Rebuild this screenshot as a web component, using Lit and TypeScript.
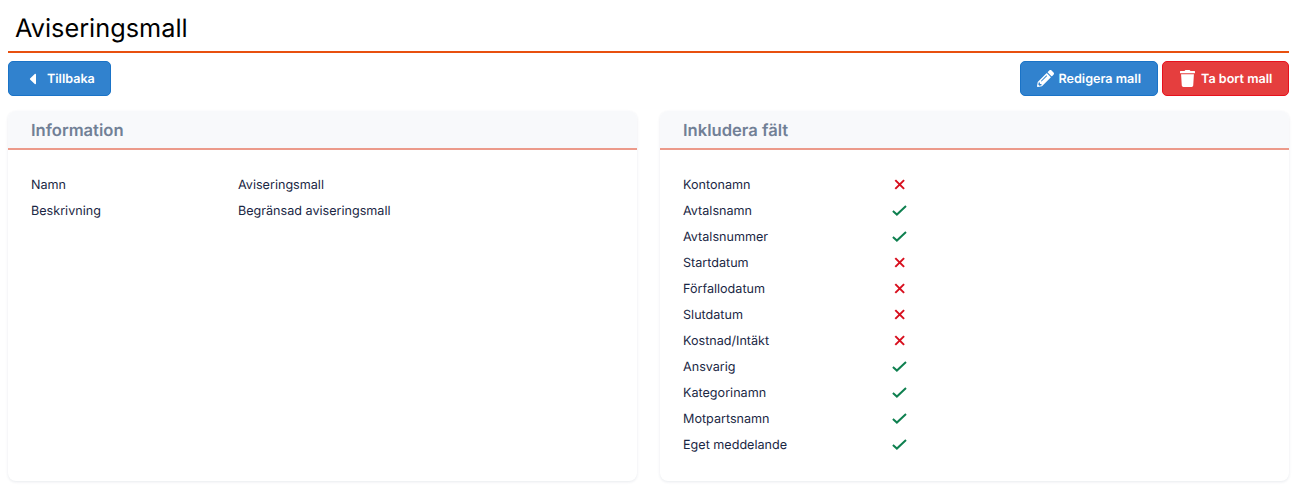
import { LitElement, html, css, svg } from "lit";
import { customElement } from "lit/decorators.js";

const fields: [string, boolean][] = [
  ["Kontonamn", false],
  ["Avtalsnamn", true],
  ["Avtalsnummer", true],
  ["Startdatum", false],
  ["Förfallodatum", false],
  ["Slutdatum", false],
  ["Kostnad/Intäkt", false],
  ["Ansvarig", true],
  ["Kategorinamn", true],
  ["Motpartsnamn", true],
  ["Eget meddelande", true],
];

const cross = svg`<svg class="ic" width="16" height="16" viewBox="0 0 16 16"><path d="M4.3 3.1 13.1 11.9M13.1 3.1 4.3 11.9" stroke="#d8101f" stroke-width="2" fill="none"/></svg>`;
const check = svg`<svg class="ic" width="16" height="16" viewBox="0 0 16 16"><path d="M1.9 8 5.9 11.6 15 3" stroke="#0f8050" stroke-width="2" fill="none"/></svg>`;

@customElement("app-root")
export class AppRoot extends LitElement {
  static styles = css`
    :host { display: block; font-family: Inter, "Liberation Sans", sans-serif; color: #1a2744; background: #fff; height: 502px; text-rendering: geometricPrecision; }
    .page { padding: 0 11px 0 8px; }
    h1 { margin: 0; box-sizing: border-box; border-bottom: 2px solid #e8500f; font-size: 25.3px; font-weight: 400; line-height: 34px; padding: 12px 0 0 7px; color: #000; height: 53px; }
    .bar { display: flex; justify-content: space-between; margin-top: 8px; }
    .right { display: flex; gap: 4px; }
    .btn { box-sizing: border-box; height: 35px; display: flex; align-items: center; border-radius: 5px; color: #fff; font-size: 12.6px; font-weight: 600; border: 1px solid #1a73c7; background: #3182ce; }
    .btn span { padding-top: 1px; }
    .back { width: 102.5px; padding-left: 20px; gap: 11px; }
    .edit { width: 138px; padding-left: 16px; gap: 4.5px; }
    .del { width: 127px; padding-left: 17px; gap: 6px; background: #e53e3e; border-color: #e8101c; }
    .cols { display: grid; grid-template-columns: 629px 629px; gap: 23px; margin-top: 15px; }
    .card { height: 370px; box-sizing: border-box; border-radius: 8px; box-shadow: 0 1px 3px rgba(30,50,90,.1); background: #fff; overflow: hidden; }
    .head { height: 39px; box-sizing: border-box; background: #f8f9fb; border-bottom: 2px solid #ec9a8a; padding: 9px 23px 0; font-size: 16.6px; font-weight: 600; line-height: 22px; color: #718096; }
    .body { padding: 22px 23px; font-size: 12.6px; }
    .row { display: flex; align-items: center; height: 26px; }
    .k1 { width: 207px; }
    .k2 { width: 208px; }
    .ic { display: block; }
  `;
  render() {
    return html`<div class="page">
      <h1>Aviseringsmall</h1>
      <div class="bar">
        <div class="btn back">
          <svg width="7" height="18" viewBox="0 0 192 512" preserveAspectRatio="none"><path fill="#fff" d="M192 127.338v257.324c0 17.818-21.543 26.741-34.142 14.142L29.196 270.142c-7.81-7.81-7.81-20.474 0-28.284l128.662-128.662c12.599-12.6 34.142-3.676 34.142 14.142z"/></svg>
          <span>Tillbaka</span>
        </div>
        <div class="right">
          <div class="btn edit">
            <svg width="17" height="17" viewBox="0 0 512 512"><path fill="#fff" d="M497.9 142.1l-46.1 46.1c-4.7 4.7-12.3 4.7-17 0l-111-111c-4.7-4.7-4.7-12.3 0-17l46.1-46.1c18.7-18.7 49.1-18.7 67.9 0l60.1 60.1c18.8 18.7 18.8 49.1 0 67.9zM284.2 99.8L21.6 362.4.4 483.9c-2.9 16.4 11.4 30.6 27.8 27.8l121.5-21.3 262.6-262.6c4.7-4.7 4.7-12.3 0-17l-111-111c-4.8-4.7-12.4-4.7-17.1 0zM124.1 339.9c-5.5-5.5-5.5-14.3 0-19.8l154-154c5.5-5.5 14.3-5.5 19.8 0s5.5 14.3 0 19.8l-154 154c-5.5 5.5-14.3 5.5-19.8 0zM88 424h48v36.3l-64.5 11.3-31.1-31.1L51.7 376H88v48z"/></svg>
            <span>Redigera mall</span>
          </div>
          <div class="btn del">
            <svg width="15" height="17" viewBox="0 0 448 512" preserveAspectRatio="none"><path fill="#fff" d="M432 32H312l-9.4-18.7A24 24 0 0 0 281.1 0H166.8a23.7 23.7 0 0 0-21.4 13.3L136 32H16A16 16 0 0 0 0 48v32a16 16 0 0 0 16 16h416a16 16 0 0 0 16-16V48a16 16 0 0 0-16-16zM53.2 467a48 48 0 0 0 47.9 45h245.8a48 48 0 0 0 47.9-45L416 128H32z"/></svg>
            <span>Ta bort mall</span>
          </div>
        </div>
      </div>
      <div class="cols">
        <section class="card">
          <div class="head">Information</div>
          <div class="body">
            <div class="row"><span class="k1">Namn</span><span>Aviseringsmall</span></div>
            <div class="row"><span class="k1">Beskrivning</span><span>Begränsad aviseringsmall</span></div>
          </div>
        </section>
        <section class="card">
          <div class="head">Inkludera fält</div>
          <div class="body">
            ${fields.map(([n, ok]) => html`<div class="row"><span class="k2">${n}</span>${ok ? check : cross}</div>`)}
          </div>
        </section>
      </div>
    </div>`;
  }
}
